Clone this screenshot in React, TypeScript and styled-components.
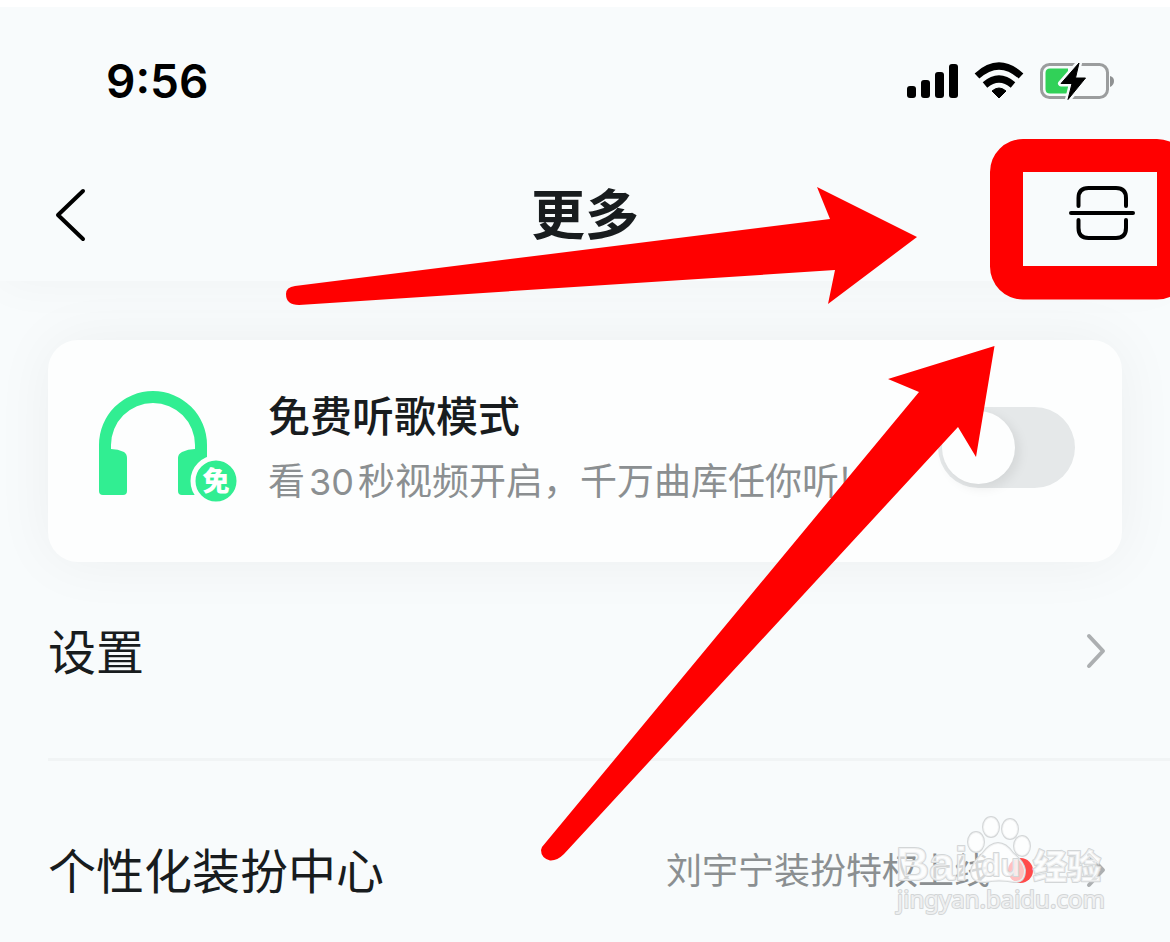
import React from 'react';
import styled, { createGlobalStyle } from 'styled-components';

const GlobalStyle = createGlobalStyle`
  * { box-sizing: border-box; }
  body {
    margin: 0;
    background: #f8fbfc;
    color: #181c1e;
    font-family: "Noto Sans CJK SC", sans-serif;
  }
`;

const Screen = styled.div`
  position: relative;
  overflow: hidden;
  border-top: 7px solid #ffffff;
`;

const Header = styled.header`
  position: relative;
  z-index: 1;
  padding-bottom: 8px;
  background: #f8fbfc;
  box-shadow: 0 0 48px rgba(30, 35, 40, 0.04);
`;

const StatusBar = styled.div`
  display: flex;
  align-items: center;
  justify-content: space-between;
  height: 148px;
  padding: 0 55px 0 106px;
`;

const Clock = styled.time`
  font: 600 46px/60px Inter, sans-serif;
  color: #000;
`;

const StatusIcons = styled.div`
  display: flex;
  align-items: center;
  gap: 15px;
`;

const NavBar = styled.nav`
  display: grid;
  grid-template-columns: 1fr auto 1fr;
  align-items: center;
  height: 118px;
  padding: 0 34px;
`;

const Title = styled.h1`
  margin: 0;
  padding-bottom: 4px;
  font-size: 54px;
  line-height: 72px;
  font-weight: 700;
`;

const IconButton = styled.button<{ $end?: boolean }>`
  display: flex;
  justify-self: ${(p) => (p.$end ? 'end' : 'start')};
  padding: ${(p) => (p.$end ? '0' : '0 20px')};
  border: 0;
  background: none;
`;

const Main = styled.main`
  padding-top: 59px;
`;

const Card = styled.section`
  display: flex;
  align-items: center;
  gap: 30px;
  margin: 0 48px;
  padding: 42px 47px 50px 50px;
  border-radius: 30px;
  background: #fdfefe;
  box-shadow: 0 0 60px rgba(30, 35, 40, 0.05);
`;

const CardText = styled.label`
  flex: 1;
  display: flex;
  flex-direction: column;
  white-space: nowrap;
`;

const CardTitle = styled.span`
  font-size: 42px;
  line-height: 64px;
  font-weight: 500;
`;

const CardNote = styled.span`
  font-size: 37px;
  line-height: 66px;
  color: #8b8f91;
`;

const Count = styled.span`
  margin: 0 4px;
  font-family: Inter, sans-serif;
  font-size: 36px;
  line-height: 36px;
`;

const Switch = styled.input`
  appearance: none;
  flex: none;
  display: flex;
  width: 137px;
  height: 81px;
  margin: 0;
  padding: 4px;
  border-radius: 41px;
  background: #e5e8e9;
  &::before {
    content: "";
    width: 73px;
    height: 73px;
    border-radius: 50%;
    background: #fdfefe;
    box-shadow: 4px 4px 12px rgba(0, 0, 0, 0.08);
  }
  &:checked { justify-content: flex-end; background: #31ee92; }
`;

const List = styled.ul`
  margin: 0 0 0 48px;
  padding: 0;
  list-style: none;
`;

const Item = styled.li`
  padding: 75px 64px 73px 0;
  & + & { border-top: 3px solid #f1f4f5; }
  &:first-child { padding-top: 55px; }
  &:last-child { padding-bottom: 38px; }
`;

const ItemLink = styled.a`
  display: flex;
  align-items: center;
  color: inherit;
  text-decoration: none;
  line-height: 64px;
  white-space: nowrap;
`;

const ItemName = styled.span`
  flex: 1;
  padding-bottom: 4px;
  font-size: 48px;
`;

const ItemValue = styled.span`
  padding-bottom: 4px;
  font-size: 36px;
  color: #8b8f91;
`;

const Dot = styled.span`
  width: 25px;
  height: 25px;
  margin: 0 53px 0 18px;
  border-radius: 50%;
  background: #ff4a4a;
`;

const Marks = styled.svg`
  position: absolute;
  z-index: 2;
  top: -7px;
  right: 0;
  pointer-events: none;
`;

const Watermark = styled.svg`
  position: absolute;
  z-index: 3;
  right: 60px;
  bottom: 22px;
  pointer-events: none;
  paint-order: stroke;
`;

const Chevron = () => (
  <svg width="20" height="36" viewBox="0 0 20 36" fill="none" stroke="#acafb1" strokeWidth="4" strokeLinecap="round" strokeLinejoin="round">
    <path d="M3 3 L17 18 L3 33" />
  </svg>
);

const Signal = () => (
  <svg width="52" height="36" viewBox="0 0 52 36">
    <rect x="0" y="23" width="9" height="12" rx="3" />
    <rect x="14" y="17" width="9" height="18" rx="3" />
    <rect x="28" y="9" width="9" height="26" rx="3" />
    <rect x="42" y="1" width="9" height="34" rx="3" />
  </svg>
);

const Wifi = () => (
  <svg width="50" height="38" viewBox="0 0 50 38">
    <path d="M3 15 Q25 -5 47 15" fill="none" stroke="#000" strokeWidth="7" transform="translate(0 -1)" />
    <path d="M11 23 Q25 11 39 23" fill="none" stroke="#000" strokeWidth="7" />
    <path d="M25 36 L18 29 Q25 23 32 29 Z" stroke="#000" strokeLinejoin="round" />
  </svg>
);

const Battery = () => (
  <svg width="76" height="40" viewBox="0 0 76 40">
    <rect x="2.500" y="3.500" width="66" height="33" rx="8" fill="none" stroke="#9b9d9e" strokeWidth="3" />
    <path d="M6.500 12 Q6.500 7.500 11 7.500 H29 V32.500 H11 Q6.500 32.500 6.500 28 Z" fill="#31d158" />
    <path d="M71 15 Q75 16 75 20 T71 26 Z" fill="#8f9192" />
    <path d="M40 2 L22 22.500 H33 L29 38.500 L46.500 17 H36.500 Z" fill="#000" stroke="#f8fbfc" strokeWidth="6" strokeLinejoin="round" />
    <path d="M40 2 L22 22.500 H33 L29 38.500 L46.500 17 H36.500 Z" fill="#000" stroke="#000" strokeLinejoin="round" />
  </svg>
);

const Headphones = () => (
  <svg width="140" height="114" viewBox="0 0 140 114">
    <g fill="#31ee92">
      <path d="M1 55 A54 54 0 0 1 109 55 V105 H84 Q80 105 80 101 V68 Q80 64 84 62 Q90 59 97 59 V55 A42 42 0 0 0 13 55 V59 Q20 59 26 62 Q29 64 29 68 V101 Q29 105 25 105 H5 Q1 105 1 101 Z" />
      <circle cx="118" cy="91" r="23" stroke="#fdfefe" strokeWidth="5" />
    </g>
    <text x="118" y="101" textAnchor="middle" fontSize="27" fontWeight="900" fill="#fff">免</text>
  </svg>
);

const BackIcon = () => (
  <svg width="34" height="56" viewBox="0 0 34 56" fill="none" stroke="#000" strokeWidth="4" strokeLinecap="round" strokeLinejoin="round">
    <path d="M29 5 L4 29 L29 53" />
  </svg>
);

const ScanIcon = () => (
  <svg width="68" height="58" viewBox="0 0 68 58" fill="none" stroke="#000" strokeWidth="4" strokeLinecap="round">
    <path d="M3 28 H65" />
    <path d="M10.500 21 V13 Q10.500 3 20.500 3 H48 Q58 3 58 13 V21" />
    <path d="M10.500 35 V43 Q10.500 53 20.500 53 H48 Q58 53 58 43 V35" />
  </svg>
);

export default function App() {
  return (
    <Screen>
      <GlobalStyle />
      <Header>
        <StatusBar>
          <Clock>9:56</Clock>
          <StatusIcons>
            <Signal />
            <Wifi />
            <Battery />
          </StatusIcons>
        </StatusBar>
        <NavBar>
          <IconButton aria-label="返回"><BackIcon /></IconButton>
          <Title>更多</Title>
          <IconButton $end aria-label="扫一扫"><ScanIcon /></IconButton>
        </NavBar>
      </Header>

      <Main>
        <Card>
          <Headphones />
          <CardText htmlFor="free-mode">
            <CardTitle>免费听歌模式</CardTitle>
            <CardNote>看<Count>30</Count>秒视频开启，千万曲库任你听!</CardNote>
          </CardText>
          <Switch type="checkbox" role="switch" id="free-mode" />
        </Card>
        <List>
          <Item>
            <ItemLink href="#settings">
              <ItemName>设置</ItemName>
              <Chevron />
            </ItemLink>
          </Item>
          <Item>
            <ItemLink href="#dress-up">
              <ItemName>个性化装扮中心</ItemName>
              <ItemValue>刘宇宁装扮特权上线</ItemValue>
              <Dot />
              <Chevron />
            </ItemLink>
          </Item>
        </List>
      </Main>

      <Marks width="1170" height="942" viewBox="0 0 1170 942" fill="#ff0000" aria-hidden="true">
        <path d="M295 286 L830 219 L817 187 L917 237 L828 304 L835 270 L299 305 Q286 305 286 294 Q286 287 295 286 Z" />
        <path d="M542 847 L919 392 L888 379 L994.500 346 L976 457 L958 427 L564 854 Q557 861 550 860.500 Q541 858 541 850 Z" />
        <path fillRule="evenodd" d="M1023 139 H1157 A33 33 0 0 1 1190 172 V266 A33 33 0 0 1 1157 299.500 H1023 A33 33 0 0 1 990 266 V172 A33 33 0 0 1 1023 139 Z M1023 172 V266 H1157 V172 Z" />
      </Marks>

      <Watermark width="216" height="106" viewBox="0 0 216 106" fill="#ffffff" fillOpacity="0.65" stroke="#d3d6d7" strokeWidth="2" strokeLinejoin="round" aria-hidden="true">
        <text x="2" y="66" fontFamily="Liberation Sans, sans-serif" fontSize="46" fontWeight="700">Bai</text>
        <ellipse cx="82" cy="28" rx="8" ry="10" />
        <ellipse cx="97" cy="13" rx="8" ry="10" />
        <ellipse cx="116" cy="15" rx="8" ry="10" />
        <ellipse cx="128" cy="32" rx="8" ry="10" />
        <path d="M104 29 Q112 29 119 39 Q130 48 131 56 Q131 69 120 68 Q104 65 92 68 Q77 69 77 57 Q78 49 88 40 Q96 29 104 29 Z" />
        <text x="87" y="62" fontFamily="Liberation Sans, sans-serif" fontSize="32" fontWeight="700">du</text>
        <text x="139" y="65" fontFamily="Noto Sans CJK SC, sans-serif" fontSize="34" fontWeight="900">经验</text>
        <text x="3" y="94" fontFamily="Noto Sans, sans-serif" fontSize="24" fontWeight="400">jingyan.baidu.com</text>
      </Watermark>
    </Screen>
  );
}
